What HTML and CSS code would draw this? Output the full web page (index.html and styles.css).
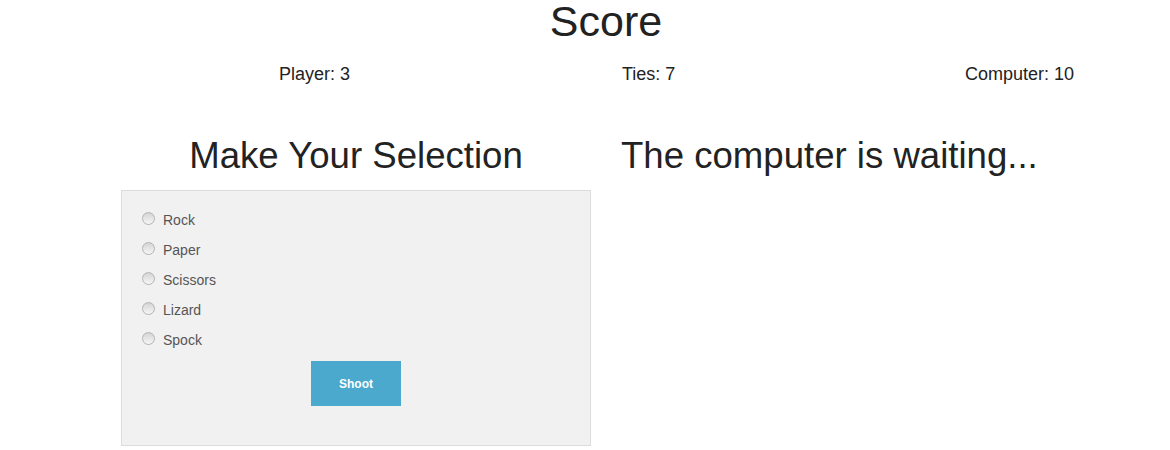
FILE: index.html
```html
<!DOCTYPE html>
<html>
<head>
<meta charset="utf-8">
<title>Rock Paper Scissors Lizard Spock</title>
<link rel="stylesheet" href="styles.css">
</head>
<body>
<div class="container">
  <h1 class="score-title">Score</h1>
  <div class="scores">
    <div class="score">Player: 3</div>
    <div class="score">Ties: 7</div>
    <div class="score">Computer: 10</div>
  </div>
  <div class="game">
    <div class="col">
      <h2 class="col-title center">Make Your Selection</h2>
      <form class="well">
        <label class="radio"><input type="radio" name="choice" value="rock"><span>Rock</span></label>
        <label class="radio"><input type="radio" name="choice" value="paper"><span>Paper</span></label>
        <label class="radio"><input type="radio" name="choice" value="scissors"><span>Scissors</span></label>
        <label class="radio"><input type="radio" name="choice" value="lizard"><span>Lizard</span></label>
        <label class="radio"><input type="radio" name="choice" value="spock"><span>Spock</span></label>
        <div class="actions"><button type="button" class="shoot">Shoot</button></div>
      </form>
    </div>
    <div class="col">
      <h2 class="col-title">The computer is waiting...</h2>
    </div>
  </div>
</div>
</body>
</html>
```
FILE: styles.css
```css
html, body {
  margin: 0;
  padding: 0;
  background: #fff;
}
body {
  font-family: "Liberation Sans", Arial, sans-serif;
  color: #222;
}
.container {
  width: 1000px;
  margin-left: 106px;
}
.score-title {
  margin: 0;
  font-size: 43px;
  font-weight: normal;
  line-height: 42px;
  text-align: center;
}
.scores {
  display: grid;
  grid-template-columns: repeat(3, 343px);
  padding-left: 173px;
  margin-top: 22px;
  font-size: 18px;
  line-height: 20px;
}
.game {
  display: flex;
  margin-top: 52px;
}
.col {
  width: 500px;
  padding: 0 15px;
  box-sizing: border-box;
}
.col-title {
  margin: 0 0 14px;
  font-size: 36.6px;
  font-weight: normal;
  line-height: 40px;
}
.center {
  text-align: center;
}
.well {
  margin: 0;
  background: #f1f1f1;
  border: 1px solid #dcdcdc;
  height: 256px;
  box-sizing: border-box;
  padding: 14px 20px 0;
}
.radio {
  display: flex;
  align-items: center;
  height: 30px;
  font-size: 14px;
  color: #555;
}
.radio input {
  appearance: none;
  -webkit-appearance: none;
  width: 13px;
  height: 13px;
  margin: -4px 8px 0 0;
  border-radius: 50%;
  border: 1px solid #b4b4b4;
  background: linear-gradient(#d4d4d4, #f6f6f6);
  box-sizing: border-box;
}
.actions {
  display: flex;
  justify-content: center;
  margin-top: 6px;
}
.shoot {
  width: 90px;
  height: 45px;
  border: none;
  background: #4aa9cd;
  color: #fff;
  font-family: "Liberation Sans", Arial, sans-serif;
  font-size: 12px;
  font-weight: bold;
}
```
